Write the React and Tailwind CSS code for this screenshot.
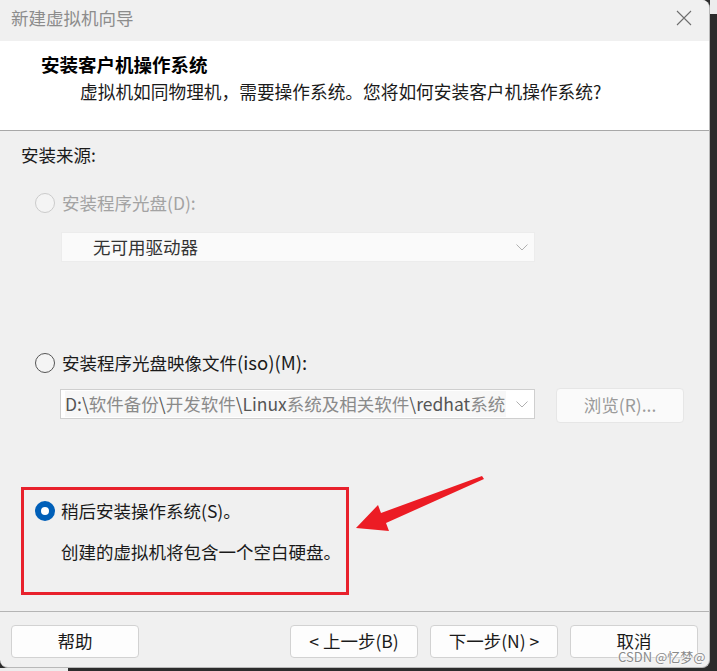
import React from "react";

const F = { fontFamily: '"Microsoft YaHei", "Noto Sans CJK SC", "Noto Sans", sans-serif' };

function Radio({ state }) {
  if (state === "checked")
    return (
      <span className="w-[20px] h-[20px] rounded-full bg-[#005fb8] flex items-center justify-center shrink-0">
        <span className="w-[8px] h-[8px] rounded-full bg-white" />
      </span>
    );
  if (state === "disabled")
    return <span className="w-[20px] h-[20px] rounded-full border border-[#cbcbcb] bg-[#f4f4f4] shrink-0" />;
  return <span className="w-[20px] h-[20px] rounded-full border border-[#555555] bg-[#f4f4f4] shrink-0" />;
}

function Chevron() {
  return (
    <svg width="12" height="7" viewBox="0 0 12 7" className="shrink-0">
      <path d="M0.5 0.5 L6 6 L11.5 0.5" fill="none" stroke="#b0b0b0" strokeWidth="1" />
    </svg>
  );
}

function Btn({ children }) {
  return (
    <div className="w-[128px] h-[33px] rounded-[4px] border border-[#d2d2d2] bg-[#fdfdfd] flex items-center justify-center text-[17.5px] text-[#1a1a1a]">
      {children}
    </div>
  );
}

export default function App() {
  return (
    <div className="relative w-[717px] h-[671px] bg-[#2c2c2c] overflow-hidden" style={F}>
      <div className="absolute right-0 top-0 w-[7px] h-[14px] bg-[#ededed]" />
      <div className="absolute left-0 bottom-0 w-[68px] h-[3px] bg-[#ededed]" />
      <div className="relative w-[710px] h-[668px] bg-[#f0f0f0] rounded-tr-[8px] rounded-br-[8px] rounded-bl-[8px] border-r border-b border-[#b8b8b8] flex flex-col overflow-hidden">
        {/* title bar */}
        <div className="h-[41px] flex items-center justify-between pl-[11px] pr-[17px] pb-[5px] bg-[#f0f0f0] shrink-0">
          <span className="text-[17.5px] text-[#8c8c8c] leading-none">新建虚拟机向导</span>
          <svg width="16" height="16" viewBox="0 0 16 16">
            <path d="M1 1 L15 15 M15 1 L1 15" stroke="#6e6e6e" strokeWidth="1.1" fill="none" />
          </svg>
        </div>
        {/* header */}
        <div className="h-[90px] bg-white border-b border-[#a8a8a8] shrink-0 pl-[41px] pt-[11px]">
          <div className="text-[18.5px] font-bold text-black leading-[24px]">安装客户机操作系统</div>
          <div className="pl-[39px] mt-[3px] text-[17.7px] text-[#1a1a1a] leading-[24px]">
            虚拟机如同物理机，需要操作系统。您将如何安装客户机操作系统?
          </div>
        </div>
        {/* body */}
        <div className="flex-1 flex flex-col pt-[12px] text-[17.5px]">
          <div className="pl-[21px] leading-[24px] text-[#1a1a1a]">安装来源:</div>

          <div className="mt-[24px] pl-[35px] flex items-center gap-[7px] leading-[24px]">
            <Radio state="disabled" />
            <span className="text-[#a3a3a3]">安装程序光盘(D):</span>
          </div>
          <div className="ml-[61px] mt-[17px] w-[474px] h-[30px] bg-[#fafafa] border border-[#ececec] flex items-center justify-between pl-[31px] pr-[6px]">
            <span className="text-[#333333]">无可用驱动器</span>
            <Chevron />
          </div>

          <div className="mt-[88px] pl-[35px] flex items-center gap-[7px] leading-[24px]">
            <Radio state="off" />
            <span className="text-[#1a1a1a]">
              安装程序光盘映像文件<span className="text-[18.5px]">(iso)(M):</span>
            </span>
          </div>
          <div className="mt-[13px] flex items-start">
            <div className="ml-[60px] mt-[1px] w-[475px] h-[30px] bg-white border border-[#cfcfcf] flex items-center pl-[4px] pr-[6px]">
              <span className="flex-1 overflow-hidden whitespace-nowrap text-[#8a8a8a] bg-[#f7f7f7] pr-[1px]">
                <span className="text-[#555555]">D:\</span>软件备份<span className="text-[#555555]">\</span>开发软件<span className="text-[#555555]">\Linux</span>系统及相关软件<span className="text-[#555555]">\redhat</span>系统
              </span>
              <span className="ml-[10px]"><Chevron /></span>
            </div>
            <div className="ml-[21px] w-[128px] h-[35px] rounded-[4px] border border-[#e6e6e6] bg-[#fafafa] flex items-center justify-center text-[#9b9b9b]">
              浏览(R)...
            </div>
          </div>

          <div className="mt-[64px] ml-[21px] w-[328px] h-[108px] border-[3px] border-[#e8212c] pl-[11px] pt-[9px]">
            <div className="flex items-center gap-[6px] leading-[24px]">
              <Radio state="checked" />
              <span className="text-[#1a1a1a]">稍后安装操作系统(S)。</span>
            </div>
            <div className="pl-[26px] mt-[17px] leading-[24px] text-[#1a1a1a]">创建的虚拟机将包含一个空白硬盘。</div>
          </div>

          <div className="mt-[16px] h-px bg-[#b4b4b4]" />

          <div className="mt-[13px] flex items-center pl-[11px]">
            <Btn>帮助</Btn>
            <div className="ml-[151px]"><Btn>&lt; 上一步(B)</Btn></div>
            <div className="ml-[12px]"><Btn>下一步(N) &gt;</Btn></div>
            <div className="ml-[12px]"><Btn>取消</Btn></div>
          </div>
        </div>

        <span
          className="absolute left-[618px] top-[650px] text-[13px] leading-none text-[#8a8a8a]"
          style={{ textShadow: "0 0 2px #fff, 0 0 2px #fff" }}
        >
          CSDN @忆梦@
        </span>
      </div>

      <svg className="absolute left-0 top-0 pointer-events-none" width="717" height="671">
        <polygon
          points="356,528 378,505 381,513 482,476 484,479 386,523 389,531"
          fill="#ec1c24"
        />
      </svg>
    </div>
  );
}
